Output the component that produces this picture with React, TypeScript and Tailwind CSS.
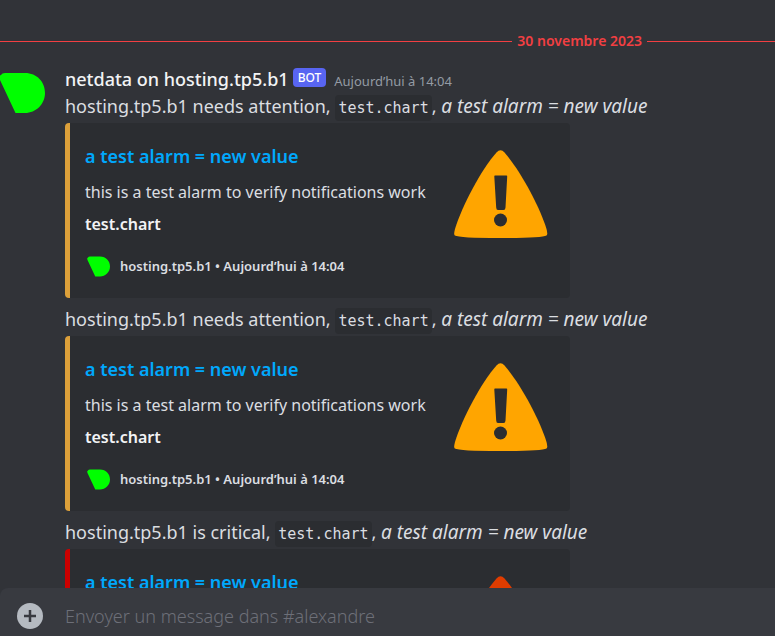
type AlertLevel = "warning" | "critical";

interface Alert {
  id: number;
  level: AlertLevel;
  status: string;
}

const alerts: Alert[] = [
  { id: 1, level: "warning", status: "needs attention" },
  { id: 2, level: "warning", status: "needs attention" },
  { id: 3, level: "critical", status: "is critical" },
];

function NetdataLogo({ className }: { className: string }) {
  return (
    <svg viewBox="0 0 48 40" className={className} aria-hidden="true">
      <path d="M3 7Q1 3 4 2Q5 0 8 0H28C40 0 48 9 48 20S39 40 28 40H18.500Z" fill="#00ff00" />
    </svg>
  );
}

function AlarmIcon({ level }: { level: AlertLevel }) {
  return (
    <svg
      viewBox="0 0 94 88"
      className={`h-[88px] w-[94px] ${level === "warning" ? "text-[#ffa500]" : "text-[#e03c00]"}`}
      aria-hidden="true"
    >
      <path
        d="M42.500 2.500Q46.500-2 50.500 2.500C66 20 86 57 92.500 79Q94 84.500 92.500 85.500Q88 88 46.500 88T0.800 85.500Q-0.500 84.500 1 79C8 56 27 20 42.500 2.500Z"
        fill="currentColor"
      />
      <path d="M41 25.500H52.500Q53.300 25.500 53.200 26.500L51.500 57.500Q51.400 60 49.500 60H44Q42.300 60 42.200 57.500L40.300 26.500Q40.200 25.500 41 25.500Z" fill="#2b2d31" />
      <circle cx="46.500" cy="70" r="6.500" fill="#2b2d31" />
    </svg>
  );
}

function Embed({ level }: { level: AlertLevel }) {
  return (
    <article
      className={`flex h-[175px] w-[505px] max-w-full justify-between rounded border-l-[5px] bg-[#2b2d31] pt-5 pr-[22px] pl-[15px] ${
        level === "warning" ? "border-[#dca03a]" : "border-[#cc0000]"
      }`}
    >
      <div>
        <h3 className="text-lg leading-[26px] font-semibold text-[#00a8fc]">
          <a href="#alarm">a test alarm = new value</a>
        </h3>
        <p className="mt-[11px] text-base leading-6 text-[#dbdee1]">
          this is a test alarm to verify notifications work
        </p>
        <p className="mt-2 text-base leading-6 font-semibold text-[#f2f3f5]">test.chart</p>
        <footer className="mt-[18px] flex items-center gap-[10px] text-[13px] leading-6 font-semibold text-[#dbdee1]">
          <span className="flex w-[25px] justify-end">
            <NetdataLogo className="h-[21px] w-6" />
          </span>
          <span>hosting.tp5.b1 • Aujourd’hui à 14:04</span>
        </footer>
      </div>
      <div className="pt-[7px]">
        <AlarmIcon level={level} />
      </div>
    </article>
  );
}

function AlertMessage({ alert }: { alert: Alert }) {
  return (
    <section>
      <p className="mb-[3px] text-lg leading-[27px] whitespace-nowrap">
        hosting.tp5.b1 {alert.status},{" "}
        <code className="rounded bg-[#2b2d31] px-[3px] py-1 font-['DejaVu_Sans_Mono',monospace] text-[15px] leading-5">
          test.chart
        </code>
        , <em className="text-[19px] leading-5">a test alarm = new value</em>
      </p>
      <Embed level={alert.level} />
    </section>
  );
}

export default function App() {
  return (
    <div className="flex h-screen flex-col overflow-hidden bg-[#313338] font-['Noto_Sans',sans-serif] text-[#dbdee1]">
      <main className="min-h-0 flex-1 overflow-hidden pt-[31px]">
        <div className="flex items-center gap-[5px] text-sm leading-5 font-semibold text-[#f23f42]">
          <span className="h-px flex-1 bg-[#f23f42]" />
          <time dateTime="2023-11-30">30 novembre 2023</time>
          <span className="h-px w-32 bg-[#f23f42]" />
        </div>
        <div className="mt-[15px] flex">
          <div className="w-[65px] shrink-0 overflow-hidden pt-[7px]">
            <NetdataLogo className="-ml-[3px] h-10 w-12" />
          </div>
          <div className="min-w-0 flex-1">
            <header className="flex h-[27px] items-center whitespace-nowrap">
              <h2 className="text-lg leading-[27px] font-medium text-[#f2f3f5]">netdata on hosting.tp5.b1</h2>
              <span className="mb-1 ml-1 rounded bg-[#5865f2] px-[5px] text-xs leading-[19px] font-medium text-white">
                BOT
              </span>
              <time className="mt-[3px] ml-2 text-[13px] leading-5 text-[#949ba4]">Aujourd’hui à 14:04</time>
            </header>
            <div className="flex flex-col gap-2">
              {alerts.map((alert) => (
                <AlertMessage key={alert.id} alert={alert} />
              ))}
            </div>
          </div>
        </div>
      </main>
      <form className="flex h-12 shrink-0 items-center rounded-tl-lg bg-[#383a40] pt-2" onSubmit={(e) => e.preventDefault()}>
        <div className="flex w-[65px] shrink-0 pl-[17px]">
          <button
            type="button"
            aria-label="Ajouter un fichier"
            className="flex size-[26px] items-center justify-center rounded-full bg-[#b5bac1]"
          >
            <svg viewBox="0 0 12 12" className="size-3" aria-hidden="true">
              <path d="M6 0V12M0 6H12" stroke="#383a40" strokeWidth="2.500" />
            </svg>
          </button>
        </div>
        <input
          type="text"
          aria-label="Message"
          placeholder="Envoyer un message dans #alexandre"
          className="min-w-0 flex-1 bg-transparent text-lg leading-7 font-light outline-none placeholder:text-[#6d6f78]"
        />
      </form>
    </div>
  );
}
